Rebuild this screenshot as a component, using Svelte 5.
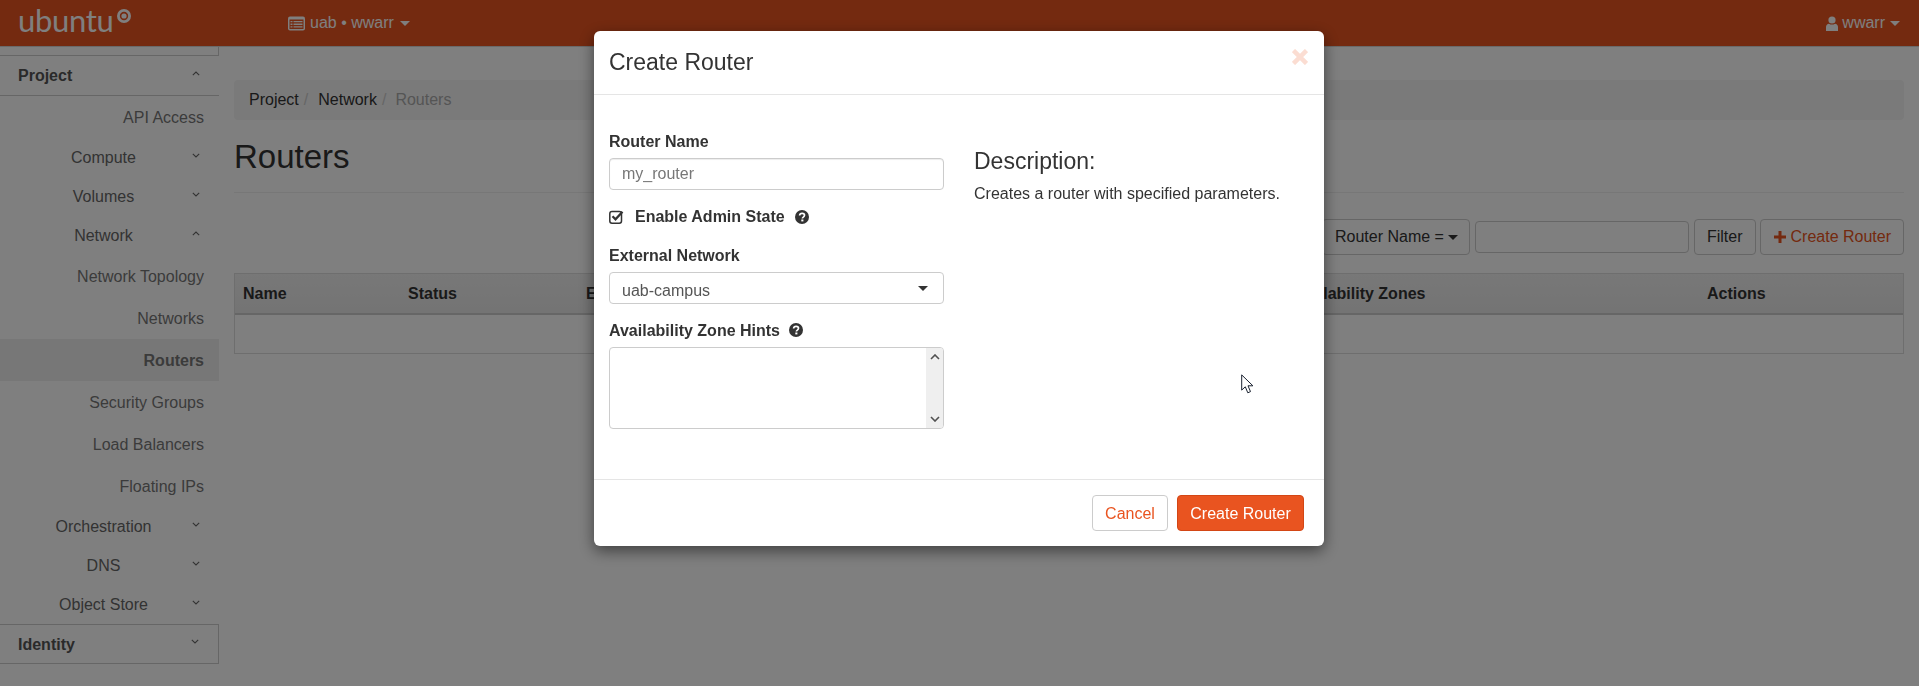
<script lang="ts">
  interface NavItem {
    label: string;
    kind: "parent" | "child";
    open?: boolean;
    active?: boolean;
  }

  const navItems: NavItem[] = [
    { label: "API Access", kind: "child" },
    { label: "Compute", kind: "parent" },
    { label: "Volumes", kind: "parent" },
    { label: "Network", kind: "parent", open: true },
    { label: "Network Topology", kind: "child" },
    { label: "Networks", kind: "child" },
    { label: "Routers", kind: "child", active: true },
    { label: "Security Groups", kind: "child" },
    { label: "Load Balancers", kind: "child" },
    { label: "Floating IPs", kind: "child" },
    { label: "Orchestration", kind: "parent" },
    { label: "DNS", kind: "parent" },
    { label: "Object Store", kind: "parent" },
  ];

  const crumbs = ["Project", "Network"];
</script>

{#snippet chevron(up: boolean)}
  <svg class="chev" viewBox="0 0 8 5" width="8" height="5" aria-hidden="true">
    <path d={up ? "M.8 4.2 4 1l3.2 3.2" : "M.8.8 4 4 7.2.8"} fill="none" stroke="currentColor" stroke-width="1.1" />
  </svg>
{/snippet}

{#snippet help()}
  <svg class="help" viewBox="0 0 14 14" width="14" height="14" aria-hidden="true">
    <circle cx="7" cy="7" r="7" fill="#333" />
    <path d="M4.6 5.500C4.700 4.100 5.700 3.300 7.100 3.300c1.400 0 2.400.9 2.400 2 0 1.800-2.100 1.700-2.100 3.100" fill="none" stroke="#fff" stroke-width="1.700" />
    <rect x="6.300" y="9.500" width="2.100" height="1.900" fill="#fff" />
  </svg>
{/snippet}

<div class="page">
  <header class="navbar">
    <div class="brand">
      <span class="brand-word">ubuntu</span>
      <svg class="brand-mark" viewBox="0 0 14 14" width="14" height="14" aria-hidden="true">
        <circle cx="7" cy="7" r="7" fill="#fff" />
        <circle cx="7" cy="7" r="3.400" fill="none" stroke="#e95420" stroke-width="1.600" />
      </svg>
    </div>
    <div class="project-picker">
      <svg viewBox="0 0 17 15" width="17" height="15" aria-hidden="true">
        <rect x="0" y="0.500" width="17" height="14" rx="2" fill="#fff" />
        <rect x="1.500" y="3.500" width="14" height="9.500" fill="#e95420" />
        <path d="M2.500 5h2v1.300h-2zM5.500 5h9v1.300h-9zM2.500 7.600h2v1.300h-2zM5.500 7.600h9v1.300h-9zM2.500 10.200h2v1.300h-2zM5.500 10.200h9v1.300h-9z" fill="#fff" />
      </svg>
      <span>uab • wwarr</span>
      <i class="caret"></i>
    </div>
    <div class="user-menu">
      <svg viewBox="0 0 12 15" width="12" height="15" aria-hidden="true">
        <circle cx="6" cy="4" r="3.600" fill="#fff" />
        <path d="M0 15v-4c0-2 1.400-3.300 3-3.300 1.800 1.200 4.200 1.200 6 0 1.600 0 3 1.300 3 3.300v4z" fill="#fff" />
      </svg>
      <span>wwarr</span>
      <i class="caret"></i>
    </div>
  </header>

  <div class="layout">
    <aside class="sidebar">
      <div class="stub"></div>
      <div class="group-head project">
        <span>Project</span>
        {@render chevron(true)}
      </div>
      {#each navItems as item}
        {#if item.kind === "parent"}
          <div class="nav-parent">
            {item.label}
            {@render chevron(!!item.open)}
          </div>
        {:else}
          <div class="nav-child" class:active={item.active}>{item.label}</div>
        {/if}
      {/each}
      <div class="group-head identity">
        <span>Identity</span>
        {@render chevron(false)}
      </div>
    </aside>

    <main class="content">
      <nav class="breadcrumb">
        {#each crumbs as crumb}
          <span class="crumb">{crumb}</span><span class="sep">/</span>
        {/each}
        <span class="crumb current">Routers</span>
      </nav>
      <h1>Routers</h1>
      <div class="toolbar">
        <button class="btn select-btn">Router Name = <i class="caret dark"></i></button>
        <input class="filter-input" type="text" />
        <button class="btn filter-btn">Filter</button>
        <button class="btn btn-link-orange">
          <svg viewBox="0 0 12 12" width="12" height="12" aria-hidden="true">
            <path d="M4.500 0h3v4.500H12v3H7.500V12h-3V7.500H0v-3h4.500z" fill="currentColor" />
          </svg>
          Create Router
        </button>
      </div>
      <div class="table">
        <div class="thead">
          <span class="col-name">Name</span>
          <span class="col-status">Status</span>
          <span class="col-ext">External Network</span>
          <span class="col-zones">Availability Zones</span>
          <span class="col-actions">Actions</span>
        </div>
        <div class="tbody"></div>
      </div>
    </main>
  </div>
</div>

<div class="backdrop"></div>

<div class="modal-wrap">
  <div class="modal">
    <div class="modal-header">
      <h3>Create Router</h3>
      <svg class="close" viewBox="0 0 16 16" width="16" height="16" aria-hidden="true">
        <path d="M1.500 1.500l13 13M14.500 1.500l-13 13" stroke="#fbddd2" stroke-width="4.500" fill="none" />
      </svg>
    </div>
    <div class="modal-body">
      <div class="form-col">
        <label class="field-label first" for="router-name">Router Name</label>
        <input id="router-name" class="text-input" type="text" placeholder="my_router" />
        <div class="check-row">
          <svg viewBox="0 0 15 14" width="15" height="14" aria-hidden="true">
            <rect x="0.800" y="1.500" width="11.700" height="11.700" rx="2.200" fill="none" stroke="#333" stroke-width="1.500" />
            <path d="M3.500 6.300l3 3 7-7.500" fill="none" stroke="#333" stroke-width="2.300" />
          </svg>
          <span class="check-label">Enable Admin State</span>
          {@render help()}
        </div>
        <div class="field-label external">External Network</div>
        <div class="select-box">
          <span class="select-value">uab-campus</span>
          <i class="caret dark"></i>
        </div>
        <div class="field-label hints"><span>Availability Zone Hints</span>{@render help()}</div>
        <div class="textarea-box">
          <div class="scrollbar">
            <svg viewBox="0 0 10 6" width="10" height="6" aria-hidden="true"><path d="M1 5l4-4 4 4" fill="none" stroke="#505050" stroke-width="1.600" /></svg>
            <svg viewBox="0 0 10 6" width="10" height="6" aria-hidden="true"><path d="M1 1l4 4 4-4" fill="none" stroke="#505050" stroke-width="1.600" /></svg>
          </div>
        </div>
      </div>
      <div class="desc-col">
        <h3>Description:</h3>
        <p>Creates a router with specified parameters.</p>
      </div>
    </div>
    <div class="modal-footer">
      <button class="btn-cancel">Cancel</button>
      <button class="btn-primary">Create Router</button>
    </div>
    <svg class="cursor" viewBox="0 0 13 20" width="13" height="20" aria-hidden="true">
      <path d="M.7.9v15.200l3.600-3.300 2.500 6 2.700-1.200-2.500-5.800h4.900z" fill="#fff" stroke="#1a2230" stroke-width="1" />
    </svg>
  </div>
</div>

<style>
  :global(body) {
    margin: 0;
    font-family: "Liberation Sans", Arial, sans-serif;
    font-size: 16px;
    color: #333;
    background: #fff;
    overflow: hidden;
  }

  .page {
    height: 686px;
    overflow: hidden;
  }

  .navbar {
    height: 47px;
    background: #e95420;
    display: flex;
    align-items: center;
    color: #fff;
    box-sizing: border-box;
    border-bottom: 1px solid #d5d5d5;
  }

  .brand {
    display: flex;
    align-items: flex-start;
    width: 288px;
    padding-left: 18px;
    box-sizing: border-box;
    height: 46px;
  }

  .brand-word {
    font-family: Lato, "Noto Sans", sans-serif;
    font-weight: 400;
    font-size: 31px;
    line-height: 41px;
    letter-spacing: -0.3px;
  }

  .brand-mark {
    margin: 9px 0 0 3px;
  }

  .project-picker,
  .user-menu {
    display: flex;
    align-items: center;
    gap: 5px;
  }

  .user-menu {
    margin-left: auto;
    margin-right: 19px;
    gap: 4px;
  }

  .caret {
    display: inline-block;
    width: 0;
    height: 0;
    border-left: 5px solid transparent;
    border-right: 5px solid transparent;
    border-top: 5px solid currentColor;
    margin-left: 1px;
  }

  .caret.dark {
    color: #333;
  }

  .layout {
    display: flex;
  }

  .sidebar {
    width: 219px;
    flex: none;
  }

  .stub {
    height: 9px;
    box-sizing: border-box;
    border-right: 1px solid #ccc;
    border-bottom: 1px solid #ccc;
  }

  .group-head {
    height: 40px;
    box-sizing: border-box;
    padding-left: 18px;
    display: flex;
    align-items: center;
    font-weight: 700;
    color: #555;
    position: relative;
  }

  .project {
    border-bottom: 1px solid #ccc;
  }

  .identity {
    border: 1px solid #ccc;
    border-left: none;
    padding-top: 2px;
  }

  .chev {
    position: absolute;
    right: 19px;
    top: 50%;
    margin-top: -5px;
    color: #666;
  }

  .nav-parent {
    height: 39px;
    line-height: 40px;
    text-align: center;
    padding-right: 12px;
    color: #666;
    position: relative;
  }

  .nav-child {
    height: 42px;
    line-height: 43px;
    text-align: right;
    padding-right: 15px;
    color: #777;
  }

  .nav-child.active {
    background: #eee;
    font-weight: 700;
    color: #777;
  }

  .content {
    flex: 1;
    min-width: 0;
    padding: 33px 15px 0;
  }

  .breadcrumb {
    height: 40px;
    background: #f5f5f5;
    border-radius: 4px;
    display: flex;
    align-items: center;
    padding-left: 15px;
  }

  .crumb {
    color: #333;
  }

  .crumb.current {
    color: #aaa;
    margin-left: -1px;
  }

  .sep {
    color: #ccc;
    margin: 0 10px 0 5px;
  }

  h1 {
    margin: 0;
    height: 72px;
    line-height: 74px;
    font-size: 33px;
    font-weight: 400;
    color: #333;
    border-bottom: 1px solid #eee;
  }

  .toolbar {
    display: flex;
    justify-content: flex-end;
    align-items: center;
    gap: 5px;
    margin-top: 26px;
  }

  .btn {
    height: 36px;
    box-sizing: border-box;
    padding: 0 12px;
    font: inherit;
    color: #333;
    background: #fff;
    border: 1px solid #ccc;
    border-radius: 4px;
    display: flex;
    align-items: center;
    gap: 4px;
  }

  .select-btn {
    padding-right: 11px;
    gap: 3px;
  }

  .filter-btn {
    margin-right: -1px;
  }

  .btn-link-orange {
    color: #e95420;
    gap: 5px;
    padding: 0 12px 0 13px;
  }

  .filter-input {
    width: 214px;
    height: 32px;
    box-sizing: border-box;
    border: 1px solid #ccc;
    border-radius: 4px;
    background: #fff;
  }

  .table {
    margin-top: 18px;
    border: 1px solid #ddd;
  }

  .thead {
    height: 39px;
    position: relative;
    background: linear-gradient(#f0f0f0, #e8e8e8);
    border-bottom: 2px solid #ccc;
    font-weight: 700;
    line-height: 39px;
    color: #333;
  }

  .thead span {
    position: absolute;
    top: 0;
  }

  .col-name { left: 8px; }
  .col-status { left: 173px; }
  .col-ext { left: 351px; }
  .col-zones { left: 1055px; }
  .col-actions { left: 1472px; }

  .tbody {
    height: 38px;
  }

  .backdrop {
    position: fixed;
    inset: 0;
    background: #000;
    opacity: 0.5;
  }

  .modal-wrap {
    position: fixed;
    inset: 0;
    display: flex;
    justify-content: center;
    align-items: flex-start;
    padding-right: 1px;
  }

  .modal {
    width: 730px;
    margin-top: 31px;
    background: #fff;
    border-radius: 6px;
    box-shadow: 0 5px 15px rgba(0, 0, 0, 0.5);
    position: relative;
  }

  .modal-header {
    height: 64px;
    box-sizing: border-box;
    border-bottom: 1px solid #e5e5e5;
    padding: 0 16px 0 15px;
    display: flex;
    align-items: center;
    justify-content: space-between;
  }

  .modal-header h3 {
    margin: 0;
    font-size: 23px;
    font-weight: 400;
    color: #333;
  }

  .close {
    margin-top: -11px;
  }

  .modal-body {
    height: 384px;
    box-sizing: border-box;
    padding: 36px 15px 0;
    display: flex;
  }

  .form-col {
    width: 335px;
    flex: none;
  }

  .field-label {
    font-weight: 700;
    height: 20px;
    line-height: 21px;
    color: #333;
    display: block;
    margin-top: 16px;
    margin-bottom: 7px;
  }

  .field-label.first {
    margin-top: 0;
  }

  .field-label.external {
    margin-top: 18px;
  }

  .hints {
    display: flex;
    align-items: center;
    gap: 9px;
  }

  .text-input,
  .select-box {
    display: block;
    width: 100%;
    height: 32px;
    box-sizing: border-box;
    border: 1px solid #ccc;
    border-radius: 4px;
    padding: 0 12px;
    font: inherit;
    color: #555;
    box-shadow: inset 0 1px 1px rgba(0, 0, 0, 0.075);
  }

  .text-input::placeholder {
    color: #777;
    opacity: 1;
  }

  .select-box {
    display: flex;
    align-items: center;
    justify-content: space-between;
    padding-right: 15px;
    box-shadow: none;
  }

  .select-value {
    margin-top: 5px;
  }

  .check-row {
    display: flex;
    align-items: center;
    height: 20px;
    margin-top: 17px;
  }

  .check-label {
    font-weight: 700;
    margin: 0 10px 0 11px;
  }

  .help {
    flex: none;
  }

  .textarea-box {
    height: 82px;
    box-sizing: border-box;
    border: 1px solid #ccc;
    border-radius: 4px;
    display: flex;
    justify-content: flex-end;
    overflow: hidden;
  }

  .scrollbar {
    width: 17px;
    background: #efefef;
    display: flex;
    flex-direction: column;
    justify-content: space-between;
    align-items: center;
    padding: 6px 0;
    box-sizing: border-box;
  }

  .desc-col {
    margin-left: 30px;
    padding-top: 17px;
  }

  .desc-col h3 {
    margin: 0;
    font-size: 23px;
    font-weight: 400;
    line-height: 26px;
    color: #333;
  }

  .desc-col p {
    margin: 10px 0 0;
    line-height: 20px;
    color: #333;
  }

  .modal-footer {
    height: 67px;
    box-sizing: border-box;
    border-top: 1px solid #e5e5e5;
    padding: 15px 20px 0 0;
    display: flex;
    justify-content: flex-end;
    gap: 9px;
  }

  .btn-cancel,
  .btn-primary {
    height: 36px;
    box-sizing: border-box;
    font: inherit;
    border-radius: 4px;
    padding: 1px 0 0;
  }

  .btn-cancel {
    width: 76px;
    color: #e95420;
    background: #fff;
    border: 1px solid #ccc;
  }

  .btn-primary {
    width: 127px;
    color: #fff;
    background: #e95420;
    border: 1px solid #d34615;
  }

  .cursor {
    position: absolute;
    left: 647px;
    top: 343px;
  }
</style>
